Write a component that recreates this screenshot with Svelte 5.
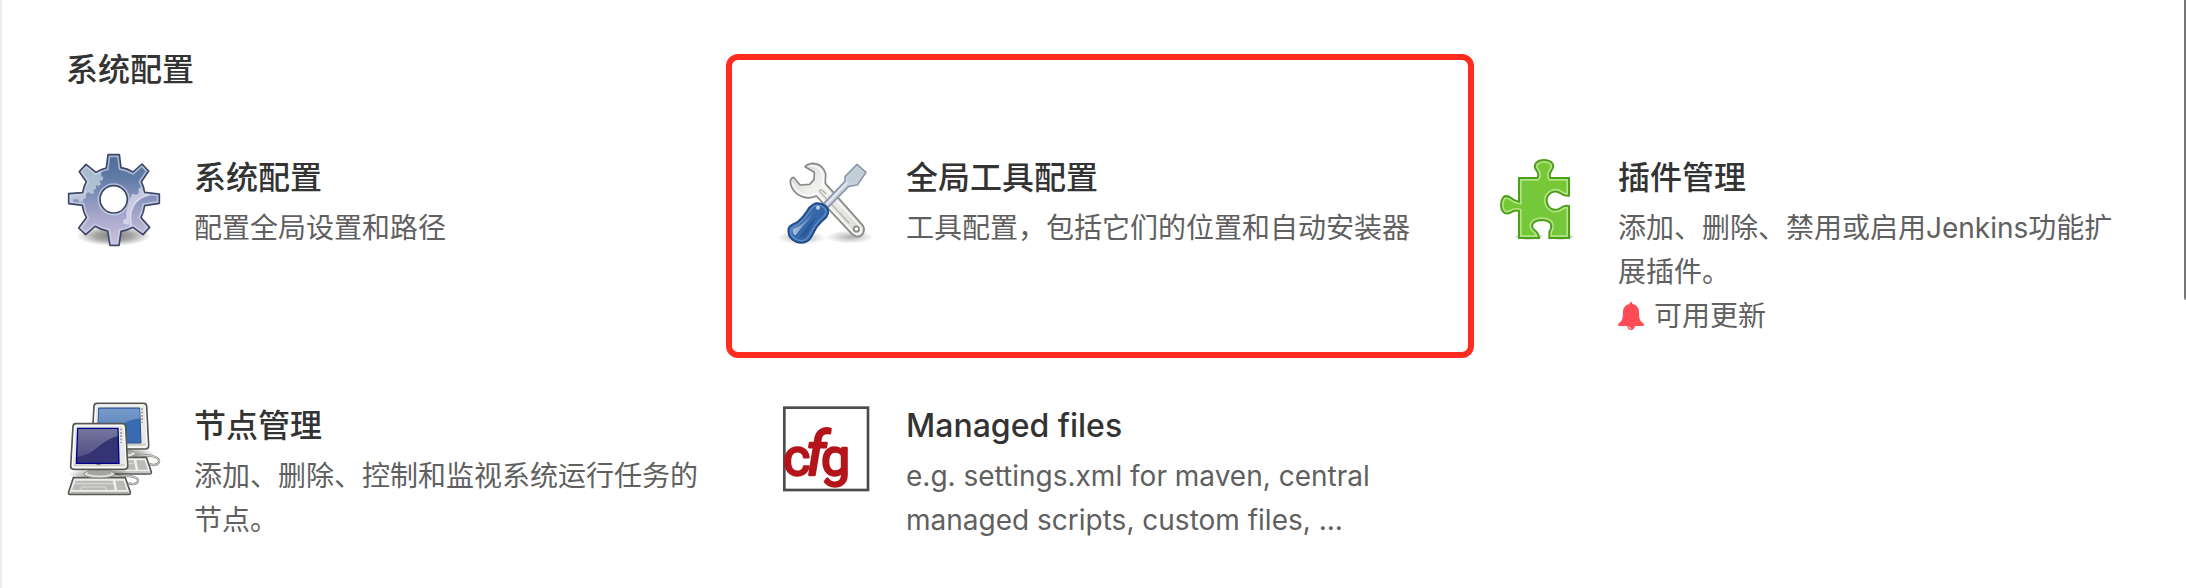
<script>
  const items = [
    { icon: 'gear', title: '系统配置', text: '配置全局设置和路径' },
    { icon: 'tools', title: '全局工具配置', text: '工具配置，包括它们的位置和自动安装器', marked: true },
    { icon: 'puzzle', title: '插件管理', text: '添加、删除、禁用或启用Jenkins功能扩展插件。', notice: '可用更新' },
    { icon: 'nodes', title: '节点管理', text: '添加、删除、控制和监视系统运行任务的节点。' },
    { icon: 'cfg', title: 'Managed files', text: 'e.g. settings.xml for maven, central managed scripts, custom files, ...' }
  ];
</script>

{#snippet gear()}
  <svg class="icon" viewBox="48 39 288 288" aria-hidden="true">
    <defs>
      <linearGradient id="gear-fill" x1="0" y1="0" x2="0" y2="1">
        <stop offset="0" stop-color="#4d6b98" />
        <stop offset="0.25" stop-color="#607ba6" />
        <stop offset="0.7" stop-color="#aaaacd" />
        <stop offset="1" stop-color="#cdbfdc" />
      </linearGradient>
      <radialGradient id="gear-shadow">
        <stop offset="0" stop-color="#000" stop-opacity="0.5" />
        <stop offset="0.5" stop-color="#000" stop-opacity="0.35" />
        <stop offset="1" stop-color="#000" stop-opacity="0" />
      </radialGradient>
      <path id="gear-shape" d="M174 41H208L213 80Q232 83 249 93L276 69L296 90L274 122Q281 137 284 154L328 159V187L284 194Q281 214 273 230L299 259L279 281L249 259Q232 268 213 271L207 313H180L173 270Q152 266 135 256L107 281L86 261L109 230Q100 213 97 193L56 188V158L98 155Q101 137 109 122L88 92L108 70L138 94Q152 85 169 81ZM191 134A41 41 0 1 0 191 216A41 41 0 1 0 191 134Z" />
      <clipPath id="gear-clip"><use href="#gear-shape" clip-rule="evenodd" /></clipPath>
    </defs>
    <ellipse cx="191" cy="284" rx="112" ry="31" fill="url(#gear-shadow)" />
    <use href="#gear-shape" fill="url(#gear-fill)" fill-rule="evenodd" />
    <g clip-path="url(#gear-clip)">
      <path d="M50 50H154V106L160 108L158 118L149 119L153 130L145 135L137 132L139 143L130 147L133 157L121 158L115 153L108 160V172L100 173L98 182L88 183L84 175H70V183H50Z" fill="#d4e0e8" fill-opacity="0.65" />
      <path d="M335 148L284 164Q249 178 240 215L238 252L220 248V236L230 233L228 215L240 175L246 158L258 161L266 157V143L274 139L278 151L294 146Z" fill="#e7e6f3" fill-opacity="0.65" />
      <path d="M300 160Q250 172 242 218Q240 240 246 270" fill="none" stroke="#dcdaf0" stroke-width="5" />
      <use href="#gear-shape" fill="none" stroke="#d2d9ee" stroke-opacity="0.65" stroke-width="15" />
    </g>
    <circle cx="191" cy="175" r="41" fill="#fff" />
    <use href="#gear-shape" fill="none" stroke="#3e4766" stroke-width="5" stroke-linejoin="round" />
  </svg>
{/snippet}

{#snippet tools()}
  <svg class="icon" viewBox="54 39 288 288" aria-hidden="true">
    <defs>
      <radialGradient id="tool-shadow">
        <stop offset="0" stop-color="#000" stop-opacity="0.3" />
        <stop offset="1" stop-color="#000" stop-opacity="0" />
      </radialGradient>
      <linearGradient id="wrench-fill" x1="0" y1="0" x2="1" y2="1">
        <stop offset="0" stop-color="#d5d5d3" />
        <stop offset="0.35" stop-color="#f1f1f0" />
        <stop offset="1" stop-color="#d9d9d6" />
      </linearGradient>
      <linearGradient id="handle-fill" x1="0" y1="0" x2="1" y2="0.5">
        <stop offset="0" stop-color="#4f83c4" />
        <stop offset="0.5" stop-color="#3567a9" />
        <stop offset="1" stop-color="#3565a6" />
      </linearGradient>
      <linearGradient id="handle-glare" x1="1" y1="0" x2="0" y2="1">
        <stop offset="0" stop-color="#fff" stop-opacity="0" />
        <stop offset="1" stop-color="#fff" stop-opacity="0.6" />
      </linearGradient>
    </defs>
    <ellipse cx="125" cy="290" rx="74" ry="20" fill="url(#tool-shadow)" />
    <ellipse cx="270" cy="288" rx="72" ry="20" fill="url(#tool-shadow)" />
    <path d="M135 77Q143 67 160 67Q190 70 197 99L196 127L309 254Q315 264 310 276Q302 290 287 286Q280 284 271 274L169 165Q140 178 113 160Q89 141 91 119Q93 110 101 109L120 132L149 130L162 116L163 94Z" fill="url(#wrench-fill)" stroke="#888a85" stroke-width="5" stroke-linejoin="round" />
    <path d="M149 75Q177 73 188 97Q193 119 186 131L302 258Q307 270 299 277Q288 283 277 270L170 156Q143 172 118 154Q101 142 98 126" fill="none" stroke="#fff" stroke-width="4" stroke-opacity="0.85" />
    <path d="M182 155L268 247M182 155Q174 148 182 147Q187 146 198 159" fill="none" stroke="#b3b3b0" stroke-width="4" />
    <circle cx="289" cy="264" r="8" fill="#fff" stroke="#888a85" stroke-width="5" />
    <path d="M192 187L255 121V107L291 70L318 94L292 132L266 136L204 199Z" fill="#c8d2dd" stroke="#8e98ab" stroke-width="5" stroke-linejoin="round" />
    <path d="M198 191L262 124" stroke="#eef1f7" stroke-width="4" />
    <path d="M262 111L291 79L309 95L288 124L266 128Z" fill="#c1ced8" />
    <path d="M160 190Q169 184 182 188Q199 193 205 207Q206 219 199 229Q183 242 171 257L155 286Q145 306 121 306Q98 302 88 285Q81 266 89 256Q97 249 111 244Q128 230 140 211Q148 197 160 190Z" fill="url(#handle-fill)" stroke="#204a87" stroke-width="5" />
    <path d="M163 195Q174 191 184 195Q196 200 199 211Q197 221 189 228Q176 238 165 254L149 281Q140 300 121 299Q102 296 94 281Q89 268 96 261Q104 255 115 250Q132 237 145 217Q154 202 163 195Z" fill="none" stroke="#7ea7d9" stroke-width="4" stroke-opacity="0.6" />
    <path d="M98 264Q127 254 151 221Q161 205 168 207Q157 218 146 237Q126 257 107 282Q98 283 98 264Z" fill="url(#handle-glare)" />
    <path d="M120 288Q138 258 170 226Q155 253 143 276Q133 292 120 288Z" fill="#204a87" fill-opacity="0.5" />
    <circle cx="174" cy="200" r="6" fill="#d4e4f6" fill-opacity="0.85" />
  </svg>
{/snippet}

{#snippet puzzle()}
  <svg class="icon" viewBox="30 39 288 288" aria-hidden="true">
    <defs>
      <linearGradient id="puzzle-fill" x1="0" y1="1" x2="1" y2="0">
        <stop offset="0" stop-color="#73c82f" />
        <stop offset="0.5" stop-color="#75c83b" />
        <stop offset="1" stop-color="#7ac832" />
      </linearGradient>
      <radialGradient id="puzzle-shadow">
        <stop offset="0.6" stop-color="#000" stop-opacity="0.35" />
        <stop offset="1" stop-color="#000" stop-opacity="0" />
      </radialGradient>
      <path id="puzzle-shape" d="M117 111H172Q179 101 170 89Q160 76 168 66Q177 57 192 57Q209 57 217 67Q223 77 214 89Q206 101 211 111H267V164Q252 166 242 157Q229 148 215 154Q200 162 200 178Q201 196 215 204Q229 210 242 201Q252 192 267 195V291H208V272Q218 259 211 246Q202 237 185 237Q166 238 159 247Q152 257 163 267Q176 276 177 291H117V210Q104 206 93 214Q78 222 69 212Q63 204 63 191Q63 177 70 169Q79 161 93 171Q104 180 117 182Z" />
      <clipPath id="puzzle-clip"><use href="#puzzle-shape" /></clipPath>
    </defs>
    <ellipse cx="147" cy="287" rx="44" ry="10" fill="url(#puzzle-shadow)" />
    <ellipse cx="242" cy="287" rx="41" ry="10" fill="url(#puzzle-shadow)" />
    <use href="#puzzle-shape" fill="url(#puzzle-fill)" />
    <use href="#puzzle-shape" clip-path="url(#puzzle-clip)" fill="none" stroke="#b0e486" stroke-width="16" />
    <use href="#puzzle-shape" fill="none" stroke="#4f9f19" stroke-width="6" />
  </svg>
{/snippet}

{#snippet keyboard()}
  <path d="M70 275H226L241 319Q242 325 235 325H60Q54 325 56 318Z" fill="#eeeeec" stroke="#555753" stroke-width="5" stroke-linejoin="round" />
  <path d="M76 284H188L194 312H66ZM196 284H221L230 312H202Z" fill="#b9bbb8" />
  <path d="M70 293H190M95 303H166M95 303L92 312M166 303L170 312" fill="none" stroke="#eeeeec" stroke-width="2" />
  <path d="M62 319H236" stroke="#a2a49f" stroke-width="3" />
{/snippet}

{#snippet monitorFrame()}
  <ellipse cx="148" cy="264" rx="46" ry="12" fill="#dfe0dc" stroke="#888a85" stroke-width="3" />
  <path d="M118 249H180L184 263Q150 274 112 263Z" fill="#a3a59f" />
  <path d="M77 113H218Q226 113 227 121L233 241Q233 250 224 250H71Q62 250 62 241L69 121Q70 113 77 113Z" fill="#e8e9e4" stroke="#555753" stroke-width="5" />
  <path d="M79 118H216Q221 118 222 124L228 239Q228 245 222 245H73Q67 245 67 239L74 124Q75 118 79 118Z" fill="none" stroke="#fff" stroke-width="3" />
  <path d="M72 237H224" stroke="#c7c9c3" stroke-width="5" />
  <path d="M213 128V171" stroke="#92948f" stroke-width="5" stroke-dasharray="5 5" />
  <path d="M139 236H152" stroke="#777973" stroke-width="3" />
{/snippet}

{#snippet nodes()}
  <svg class="icon" viewBox="48 48 288 288" aria-hidden="true">
    <defs>
      <linearGradient id="screen-front" x1="0" y1="0" x2="1" y2="1">
        <stop offset="0" stop-color="#34346e" />
        <stop offset="1" stop-color="#343477" />
      </linearGradient>
      <linearGradient id="screen-glare" x1="0" y1="0" x2="0" y2="1">
        <stop offset="0" stop-color="#fff" stop-opacity="0.32" />
        <stop offset="1" stop-color="#fff" stop-opacity="0.14" />
      </linearGradient>
      <radialGradient id="node-shadow">
        <stop offset="0.3" stop-color="#000" stop-opacity="0.4" />
        <stop offset="1" stop-color="#000" stop-opacity="0" />
      </radialGradient>
    </defs>
    <ellipse cx="230" cy="205" rx="85" ry="22" fill="url(#node-shadow)" />
    <path d="M266 211C304 203 335 216 326 230C320 240 302 238 298 232" fill="none" stroke="#8d8f8a" stroke-width="7" />
    <path d="M266 211C304 203 335 216 326 230C320 240 302 238 298 232" fill="none" stroke="#d5d7d2" stroke-width="3" />
    <g transform="translate(63 -61)">
      {@render keyboard()}
      {@render monitorFrame()}
      <path d="M83 127H206L210 232H79Z" fill="#386bb0" stroke="#244f90" stroke-width="3" />
      <path d="M84 129H205L207 158Q170 162 143 184Q116 208 81 213Z" fill="url(#screen-glare)" />
    </g>
    <ellipse cx="150" cy="266" rx="96" ry="20" fill="url(#node-shadow)" />
    <path d="M202 272C241 264 271 276 263 288C256 297 240 295 236 290" fill="none" stroke="#8d8f8a" stroke-width="7" />
    <path d="M202 272C241 264 271 276 263 288C256 297 240 295 236 290" fill="none" stroke="#d5d7d2" stroke-width="3" />
    {@render keyboard()}
    {@render monitorFrame()}
    <path d="M83 127H204L207 232H79Z" fill="url(#screen-front)" stroke="#00008b" stroke-width="4" />
    <path d="M85 129H202L203 151Q172 158 143 184Q116 208 82 213Z" fill="url(#screen-glare)" />
  </svg>
{/snippet}

{#snippet cfg()}
  <svg class="icon" viewBox="39 33 288 288" aria-hidden="true">
    <rect x="58" y="50" width="251" height="247" fill="#fff" stroke="#4c4c4c" stroke-width="8" />
    <text class="cfg" y="253"><tspan x="54">c</tspan><tspan class="slant" x="122">f</tspan><tspan x="168">g</tspan></text>
  </svg>
{/snippet}

<main>
  <h2>系统配置</h2>
  <div class="grid">
    {#each items as item}
      <a class="item" class:marked={item.marked} href="#{item.icon}">
        {#if item.icon === 'gear'}{@render gear()}
        {:else if item.icon === 'tools'}{@render tools()}
        {:else if item.icon === 'puzzle'}{@render puzzle()}
        {:else if item.icon === 'nodes'}{@render nodes()}
        {:else}{@render cfg()}{/if}
        <div class="body">
          <h3>{item.title}</h3>
          <p>{item.text}</p>
          {#if item.notice}
            <p class="notice">
              <svg class="bell" viewBox="0 0 28 28" aria-hidden="true">
                <path d="M13 0C14 0 14.500 1 14.500 2C19 3 21 6 21 10C21 17 22 19 25 21C26.500 23 26 24 24.500 24H17C16.500 26.500 15 28 13 28S9.500 26.500 9 24H1.500C0 24-.5 23 1 21C4 19 5 17 5 10C5 6 7 3 11.500 2C11.500 1 12 0 13 0Z" fill="#ff4b55" />
                <path d="M10.500 24.500Q11 26 13 26.500" fill="none" stroke="#fff" />
              </svg>
              {item.notice}
            </p>
          {/if}
        </div>
      </a>
    {/each}
  </div>
  <div class="scroll-thumb"></div>
</main>

<style>
  :global(body) {
    background: #fff;
  }
  main {
    position: relative;
    box-sizing: border-box;
    min-height: 100vh;
    padding: 46px 48px 24px 64px;
    border-left: 2px solid #e9eef3;
    font-family: Inter, "Noto Sans CJK SC", sans-serif;
    color: #333;
  }
  h2,
  h3,
  p {
    margin: 0;
  }
  h2,
  h3 {
    font-size: 32px;
    line-height: 48px;
    font-weight: 500;
  }
  h2 {
    margin-bottom: 60px;
  }
  .grid {
    display: grid;
    grid-template-columns: repeat(3, minmax(0, 1fr));
    gap: 64px;
  }
  .item {
    position: relative;
    display: flex;
    gap: 32px;
    color: inherit;
    text-decoration: none;
  }
  .icon {
    flex: none;
    width: 96px;
    height: 96px;
    overflow: visible;
  }
  .body {
    flex: 1;
    min-width: 0;
  }
  h3 {
    margin-bottom: 4px;
  }
  p {
    font-size: 28px;
    line-height: 44px;
    color: #606060;
  }
  .notice {
    display: flex;
    align-items: center;
    gap: 8px;
  }
  .bell {
    width: 28px;
    height: 28px;
  }
  .cfg {
    font: 400 156px Roboto, sans-serif;
    fill: #b3151b;
    stroke: #b3151b;
    stroke-width: 7px;
    stroke-linejoin: round;
  }
  .slant {
    font-size: 180px;
    font-style: italic;
  }
  .marked::after {
    content: "";
    position: absolute;
    inset: -100px -48px -20px -52px;
    border: 6px solid #ff2c1f;
    border-radius: 12px;
    pointer-events: none;
  }
  .scroll-thumb {
    position: absolute;
    top: 0;
    right: 0;
    width: 2px;
    height: 300px;
    border-radius: 0 0 0 2px;
    background: #777;
  }
</style>
